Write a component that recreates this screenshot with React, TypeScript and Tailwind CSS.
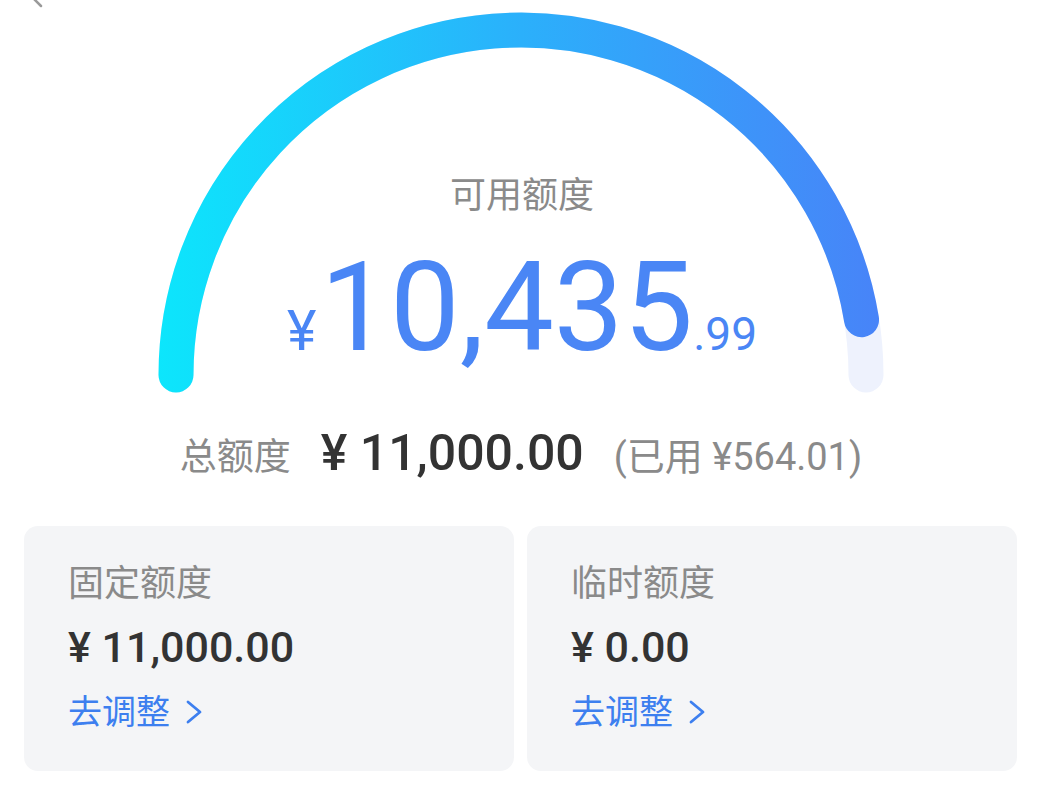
import React from "react";

const total = 11000;
const used = 564.01;
const available = total - used;

const cx = 521;
const cy = 375;
const r = 345;

const quotaCards = [
  { title: "固定额度", amount: "¥ 11,000.00" },
  { title: "临时额度", amount: "¥ 0.00" },
];

const Gauge = () => {
  const angle = Math.PI * (available / total);
  const endX = cx - r * Math.cos(angle);
  const endY = cy - r * Math.sin(angle);

  return (
    <svg className="absolute inset-0" width="1060" height="420" viewBox="0 0 1060 420" fill="none">
      <defs>
        <linearGradient id="arcGrad" gradientUnits="userSpaceOnUse" x1="158" y1="0" x2="884" y2="0">
          <stop offset="0" stopColor="#0ce6fc" />
          <stop offset="0.5" stopColor="#2bb0fb" />
          <stop offset="1" stopColor="#4883f8" />
        </linearGradient>
      </defs>
      <path
        d={`M ${cx - r} ${cy} A ${r} ${r} 0 0 1 ${cx + r} ${cy}`}
        stroke="#eef2fd"
        strokeWidth="35"
        strokeLinecap="round"
      />
      <path
        d={`M ${cx - r} ${cy} A ${r} ${r} 0 0 1 ${endX} ${endY}`}
        stroke="url(#arcGrad)"
        strokeWidth="35"
        strokeLinecap="round"
      />
    </svg>
  );
};

export default function App() {
  return (
    <div className="relative h-[786px] w-[1060px] overflow-hidden bg-white font-['Roboto','Noto_Sans_CJK_SC',sans-serif]">
      {/* top-left back arrow, cut off by the screenshot edge */}
      <svg className="absolute left-[30px] top-[-12px]" width="14" height="20" viewBox="0 0 14 20" fill="none">
        <path d="M11 2 L3 10 L11 18" stroke="#9a9a9a" strokeWidth="2.5" strokeLinecap="round" strokeLinejoin="round" />
      </svg>

      <section className="relative h-[420px]">
        <Gauge />
        <div className="relative flex flex-col items-center pt-[174px] pr-[16px]">
          <p className="text-[36px] leading-[44px] text-[#8a8a8a]">可用额度</p>
          <div className="mt-[28px] flex items-baseline text-[#4a86f5]">
            <span className="mr-[4px] text-[56px] leading-none">¥</span>
            <span className="text-[124px] leading-none">10,435</span>
            <span className="text-[46px] leading-none">.99</span>
          </div>
        </div>
      </section>

      <div className="mt-[8px] flex items-baseline justify-center pr-[18px]">
        <span className="text-[37px] leading-none text-[#8a8a8a]">总额度</span>
        <span className="ml-[30px] text-[50px] font-medium leading-none text-[#333333]">¥ 11,000.00</span>
        <span className="ml-[30px] text-[38px] leading-none text-[#8a8a8a]">(已用 ¥564.01)</span>
      </div>

      <div className="ml-[24px] mr-[43px] mt-[48px] grid grid-cols-2 gap-[13px]">
        {quotaCards.map((card) => (
          <article key={card.title} className="flex h-[245px] flex-col rounded-[14px] bg-[#f4f5f7] px-[44px] pt-[36px]">
            <p className="text-[36px] leading-[44px] text-[#8a8a8a]">{card.title}</p>
            <p className="mt-[16px] text-[43px] font-medium leading-[50px] text-[#333333]">{card.amount}</p>
            <button className="mt-[18px] flex items-center gap-[14px] text-[34px] leading-[44px] text-[#3d7fef]">
              去调整
              <svg width="20" height="26" viewBox="0 0 20 26" fill="none">
                <path d="M4 3 L16 13 L4 23" stroke="#3d7fef" strokeWidth="2.8" strokeLinecap="round" strokeLinejoin="round" />
              </svg>
            </button>
          </article>
        ))}
      </div>
    </div>
  );
}
